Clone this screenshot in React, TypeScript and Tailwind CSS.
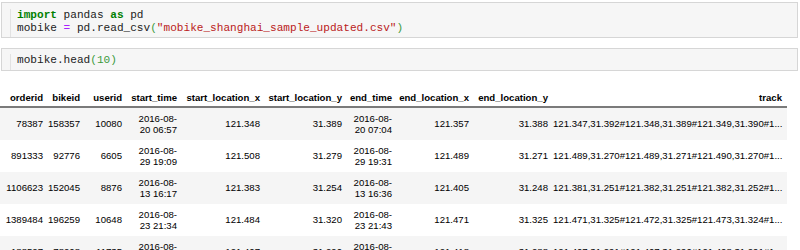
const rows = [
  { orderid: 78387, bikeid: 158357, userid: 10080, start: ['2016-08-', '20 06:57'], sx: '121.348', sy: '31.389', end: ['2016-08-', '20 07:04'], ex: '121.357', ey: '31.388', track: '121.347,31.392#121.348,31.389#121.349,31.390#1...' },
  { orderid: 891333, bikeid: 92776, userid: 6605, start: ['2016-08-', '29 19:09'], sx: '121.508', sy: '31.279', end: ['2016-08-', '29 19:31'], ex: '121.489', ey: '31.271', track: '121.489,31.270#121.489,31.271#121.490,31.270#1...' },
  { orderid: 1106623, bikeid: 152045, userid: 8876, start: ['2016-08-', '13 16:17'], sx: '121.383', sy: '31.254', end: ['2016-08-', '13 16:36'], ex: '121.405', ey: '31.248', track: '121.381,31.251#121.382,31.251#121.382,31.252#1...' },
  { orderid: 1389484, bikeid: 196259, userid: 10648, start: ['2016-08-', '23 21:34'], sx: '121.484', sy: '31.320', end: ['2016-08-', '23 21:43'], ex: '121.471', ey: '31.325', track: '121.471,31.325#121.472,31.325#121.473,31.324#1...' },
  { orderid: 188527, bikeid: 78208, userid: 11735, start: ['2016-08-', '11 18:52'], sx: '121.407', sy: '31.290', end: ['2016-08-', '11 18:59'], ex: '121.418', ey: '31.288', track: '121.407,31.291#121.407,31.290#121.408,31.291#1...' },
];

// column widths picked so each right edge lands where the notebook put it
const cols = [
  { key: 'orderid', w: 'w-[48px]' },
  { key: 'bikeid', w: 'w-[37px]' },
  { key: 'userid', w: 'w-[42px]' },
  { key: 'start_time', w: 'w-[55px]' },
  { key: 'start_location_x', w: 'w-[83px]' },
  { key: 'start_location_y', w: 'w-[82px]' },
  { key: 'end_time', w: 'w-[50px]' },
  { key: 'end_location_x', w: 'w-[77px]' },
  { key: 'end_location_y', w: 'w-[79px]' },
  { key: 'track', w: 'w-[234px]' },
];

function CodeCell({ children, className }: { children: React.ReactNode; className: string }) {
  return (
    <div className={`ml-[1px] mr-[2px] flex border border-[#d6d6d6] bg-[#f6f6f6] ${className}`}>
      <div className="w-[9px] border-r border-[#e2e2e2]" />
      <div
        className="pl-[6px] text-[11.1px] leading-[12.5px] text-[#222] whitespace-pre"
        style={{ fontFamily: '"Liberation Mono", "DejaVu Sans Mono", monospace' }}
      >
        {children}
      </div>
    </div>
  );
}

function DateCell({ lines }: { lines: string[] }) {
  return (
    <>
      {lines[0]}
      <br />
      {lines[1]}
    </>
  );
}

const td = 'pl-0 pr-[5px] text-right whitespace-nowrap';

export default function App() {
  return (
    <div className="w-[800px] h-[250px] overflow-hidden bg-white pt-[2px]">
      <CodeCell className="h-[36px] pt-[6px]">
        <div>
          <span className="font-bold text-[#008000]">import</span> pandas <span className="font-bold text-[#008000]">as</span> pd
        </div>
        <div>
          mobike <span className="text-[#aa22ff]">=</span> pd.read_csv<span className="text-[#3c9a3c]">(</span>
          <span className="text-[#ba2121]">"mobike_shanghai_sample_updated.csv"</span>
          <span className="text-[#3c9a3c]">)</span>
        </div>
      </CodeCell>

      <CodeCell className="mt-[10px] h-[23px] pt-[5px]">
        <div>
          mobike.head<span className="text-[#3c9a3c]">(10)</span>
        </div>
      </CodeCell>

      <table
        className="mt-[21px] w-[787px] table-fixed border-separate border-spacing-0 text-[9.6px] leading-[11.5px] text-black"
        style={{ fontFamily: '"Liberation Sans", Arial, sans-serif' }}
      >
        <thead>
          <tr>
            {cols.map(c => (
              <th
                key={c.key}
                className={`${c.w} pl-0 pr-[5px] pt-0 pb-[2px] leading-[12px] text-right font-bold whitespace-nowrap border-b-2 border-[#7a7a7a]`}
              >
                {c.key}
              </th>
            ))}
          </tr>
        </thead>
        <tbody>
          {rows.map((r, i) => (
            <tr key={r.orderid} className={`h-[32px] ${i % 2 === 0 ? 'bg-[#f5f5f5]' : 'bg-white'}`}>
              <td className={td}>{r.orderid}</td>
              <td className={td}>{r.bikeid}</td>
              <td className={td}>{r.userid}</td>
              <td className={td}><DateCell lines={r.start} /></td>
              <td className={td}>{r.sx}</td>
              <td className={td}>{r.sy}</td>
              <td className={td}><DateCell lines={r.end} /></td>
              <td className={td}>{r.ex}</td>
              <td className={td}>{r.ey}</td>
              <td className={td}>{r.track}</td>
            </tr>
          ))}
        </tbody>
      </table>
    </div>
  );
}
